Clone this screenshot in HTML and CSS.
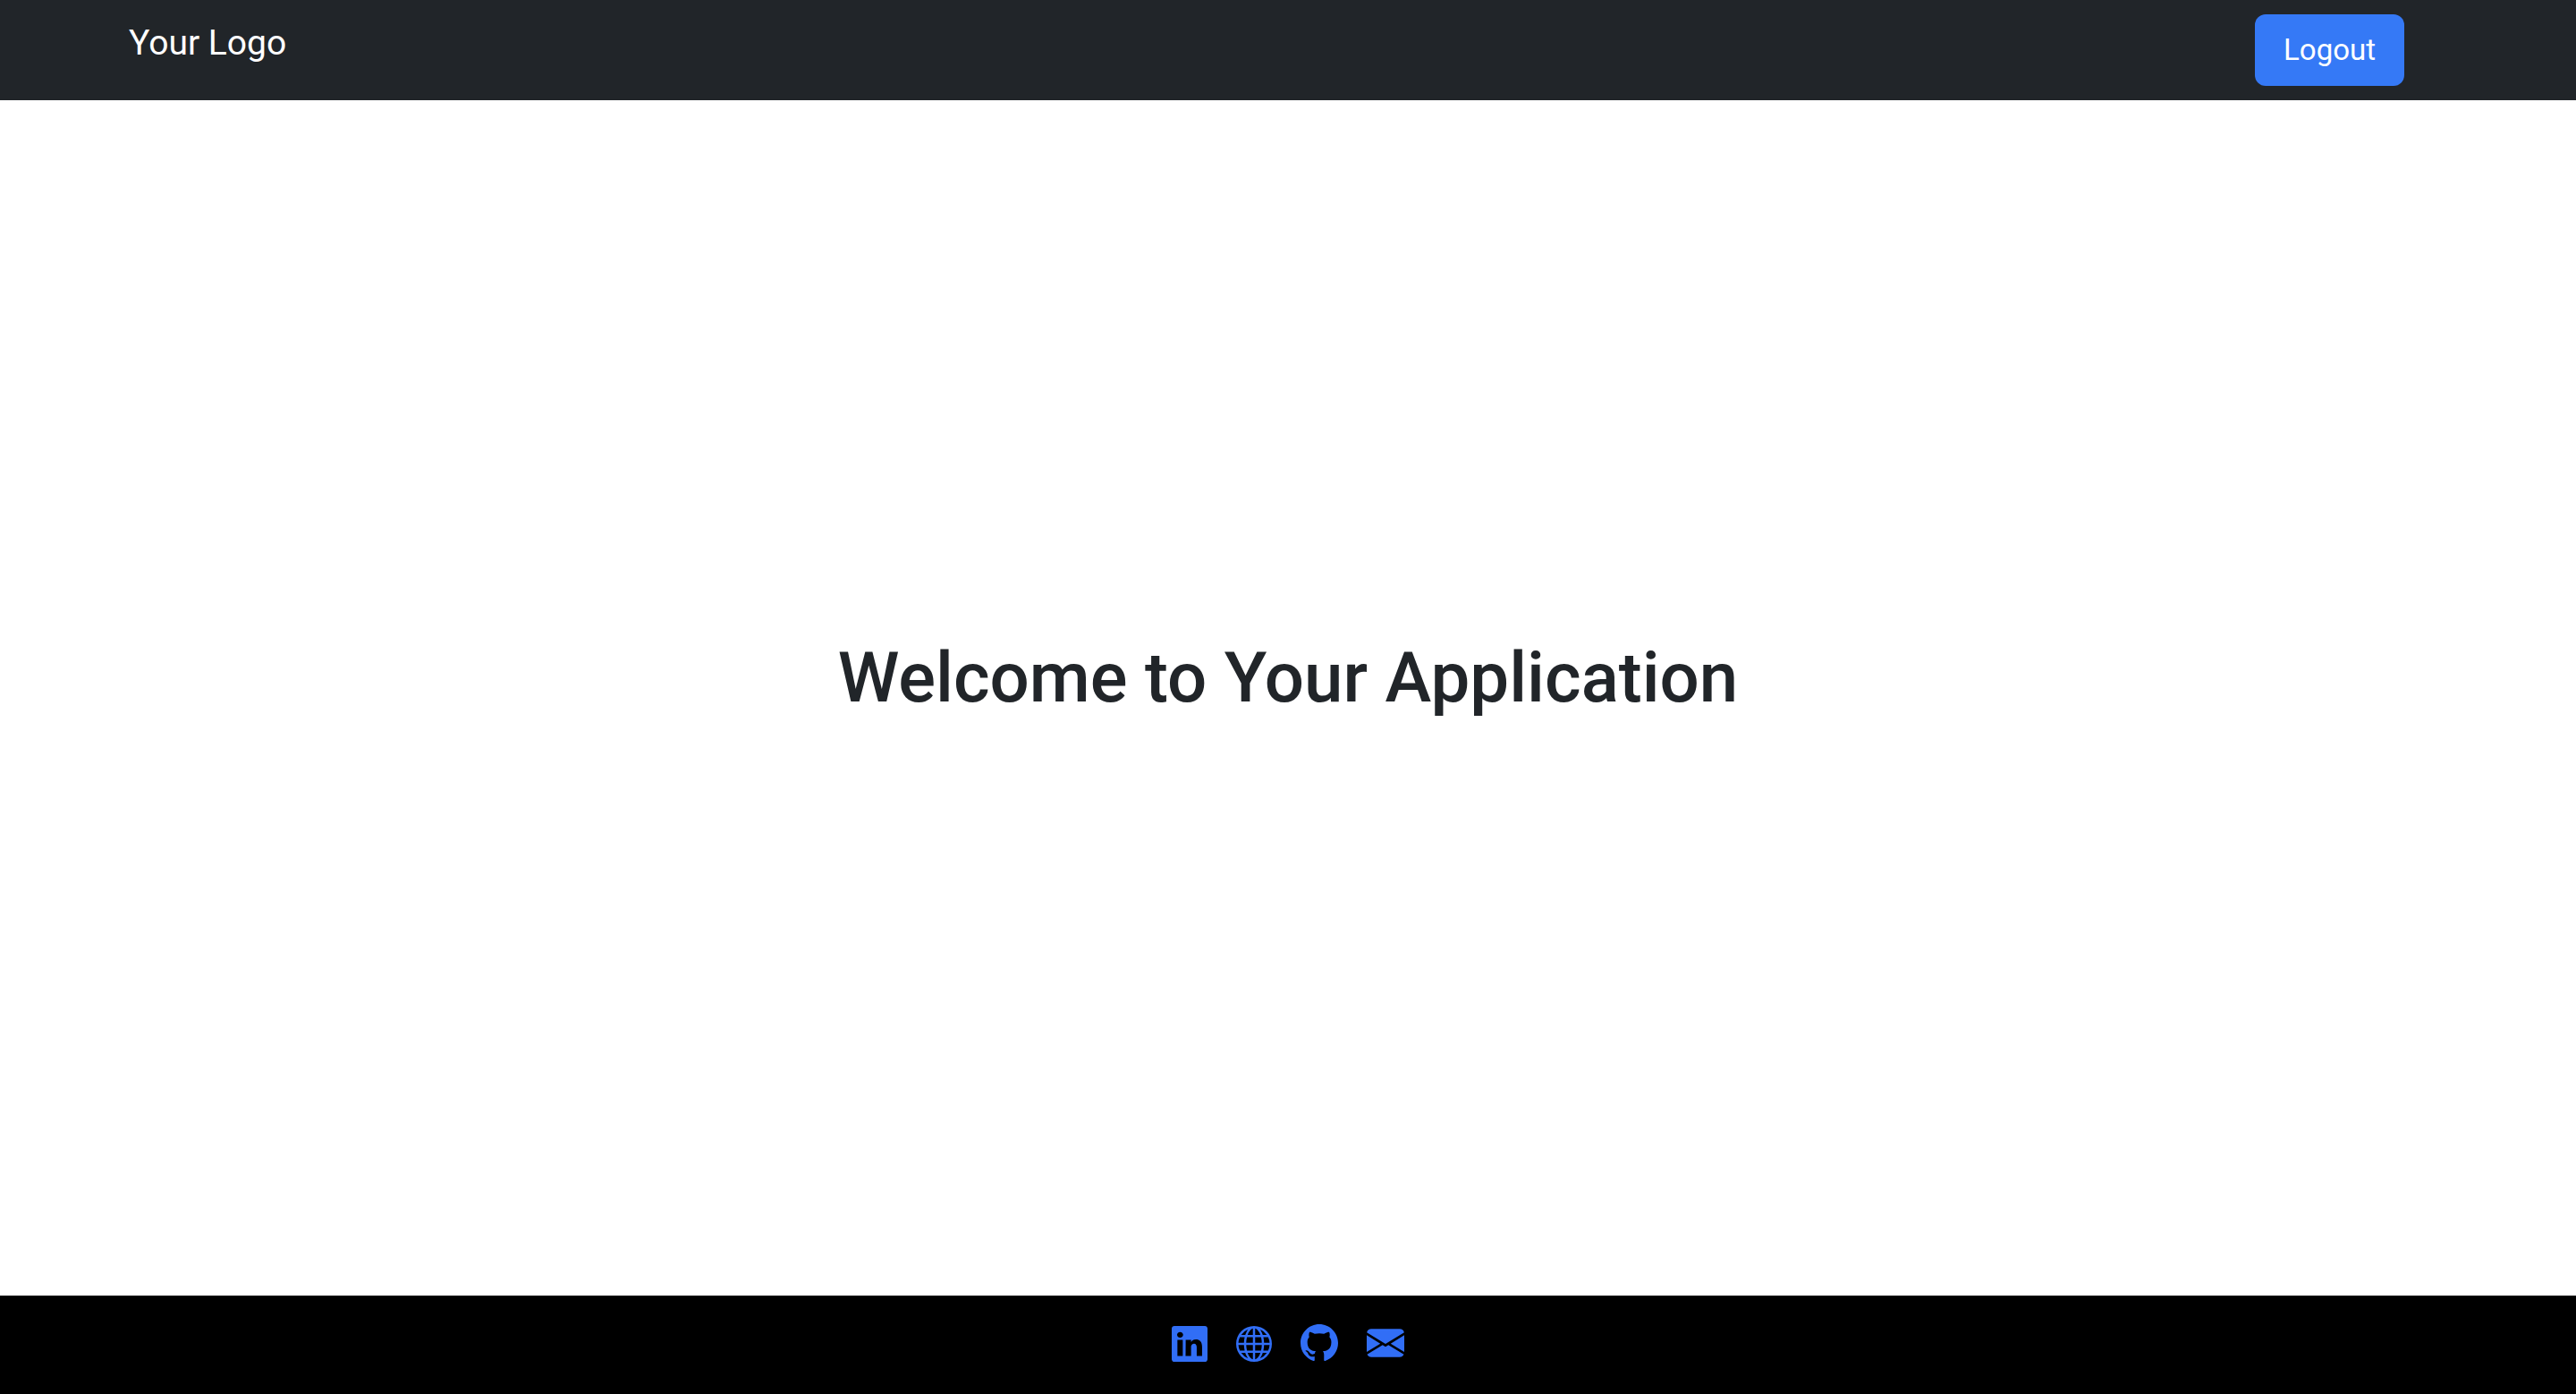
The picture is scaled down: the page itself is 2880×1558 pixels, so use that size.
FILE: index.html
```html
<!DOCTYPE html>
<html lang="en">
<head>
  <meta charset="utf-8">
  <meta name="viewport" content="width=device-width, initial-scale=1">
  <title>Your Application</title>
  <link rel="stylesheet" href="styles.css">
</head>
<body>
  <header class="navbar">
    <a class="brand" href="#">Your Logo</a>
    <button class="logout" type="button">Logout</button>
  </header>
  <main class="welcome">
    <h1 class="title">Welcome to Your Application</h1>
  </main>
  <footer class="footer">
    <a class="social" href="#" aria-label="LinkedIn">
      <svg class="icon" viewBox="0 0 16 16" aria-hidden="true"><path d="M0 1.146C0 .513.526 0 1.175 0h13.65C15.474 0 16 .513 16 1.146v13.708c0 .633-.526 1.146-1.175 1.146H1.175C.526 16 0 15.487 0 14.854zm4.943 12.248V6.169H2.542v7.225zm-1.2-8.212c.837 0 1.358-.554 1.358-1.248-.015-.709-.52-1.248-1.342-1.248S2.4 3.226 2.4 3.934c0 .694.521 1.248 1.327 1.248zm4.908 8.212V9.359c0-.216.016-.432.08-.586.173-.431.568-.878 1.232-.878.869 0 1.216.662 1.216 1.634v3.865h2.401V9.25c0-2.22-1.184-3.252-2.764-3.252-1.274 0-1.845.7-2.165 1.193v.025h-.016l.016-.025V6.169h-2.4c.03.678 0 7.225 0 7.225z"/></svg>
    </a>
    <a class="social" href="#" aria-label="Website">
      <svg class="icon" viewBox="0 0 16 16" aria-hidden="true"><path d="M0 8a8 8 0 1 1 16 0A8 8 0 0 1 0 8m7.5-6.923c-.67.204-1.335.82-1.887 1.855A8 8 0 0 0 5.145 4H7.5zM4.09 4a9.3 9.3 0 0 1 .64-1.539 7 7 0 0 1 .597-.933A7.03 7.03 0 0 0 2.255 4zm-.582 3.5c.03-.877.138-1.718.312-2.5H1.674a7 7 0 0 0-.656 2.5zM4.847 5a12.5 12.5 0 0 0-.338 2.5H7.5V5zM8.5 5v2.5h2.99a12.5 12.5 0 0 0-.337-2.5zM4.51 8.5a12.5 12.5 0 0 0 .337 2.5H7.5V8.5zm3.99 0V11h2.653c.187-.765.306-1.608.338-2.5zM5.145 12q.208.58.468 1.068c.552 1.035 1.218 1.65 1.887 1.855V12zm.182 2.472a7 7 0 0 1-.597-.933A9.3 9.3 0 0 1 4.09 12H2.255a7 7 0 0 0 3.072 2.472M3.82 11a13.7 13.7 0 0 1-.312-2.5h-2.49c.062.89.291 1.733.656 2.5zm6.853 3.472A7 7 0 0 0 13.745 12H11.91a9.3 9.3 0 0 1-.64 1.539 7 7 0 0 1-.597.933M8.5 12v2.923c.67-.204 1.335-.82 1.887-1.855q.26-.487.468-1.068zm3.68-1h2.146c.365-.767.594-1.61.656-2.5h-2.49a13.7 13.7 0 0 1-.312 2.5m2.802-3.5a7 7 0 0 0-.656-2.5H12.18c.174.782.282 1.623.312 2.5zM11.27 2.461c.247.464.462.98.64 1.539h1.835a7 7 0 0 0-3.072-2.472c.218.284.418.598.597.933M10.855 4a8 8 0 0 0-.468-1.068C9.835 1.897 9.17 1.282 8.5 1.077V4z"/></svg>
    </a>
    <a class="social" href="#" aria-label="GitHub">
      <svg class="icon icon-large" viewBox="0 0 16 16" aria-hidden="true"><path d="M8 0C3.58 0 0 3.58 0 8c0 3.54 2.29 6.53 5.47 7.59.4.07.55-.17.55-.38 0-.19-.01-.82-.01-1.49-2.01.37-2.53-.49-2.69-.94-.09-.23-.48-.94-.82-1.13-.28-.15-.68-.52-.01-.53.63-.01 1.08.58 1.23.82.72 1.21 1.87.87 2.33.66.07-.52.28-.87.51-1.07-1.78-.2-3.64-.89-3.64-3.95 0-.87.31-1.59.82-2.15-.08-.2-.36-1.02.08-2.12 0 0 .67-.21 2.2.82.64-.18 1.32-.27 2-.27s1.36.09 2 .27c1.53-1.04 2.2-.82 2.2-.82.44 1.1.16 1.92.08 2.12.51.56.82 1.27.82 2.15 0 3.07-1.87 3.75-3.65 3.95.29.25.54.73.54 1.48 0 1.07-.01 1.93-.01 2.2 0 .21.15.46.55.38A8.01 8.01 0 0 0 16 8c0-4.42-3.58-8-8-8"/></svg>
    </a>
    <a class="social" href="#" aria-label="Email">
      <svg class="icon icon-large" viewBox="0 0 16 16" aria-hidden="true"><path d="M.05 3.555A2 2 0 0 1 2 2h12a2 2 0 0 1 1.95 1.555L8 8.414zM0 4.697v7.104l5.803-3.558zM6.761 8.83l-6.57 4.027A2 2 0 0 0 2 14h12a2 2 0 0 0 1.808-1.144l-6.57-4.027L8 9.586zm3.436-.586L16 11.801V4.697z"/></svg>
    </a>
  </footer>
</body>
</html>
```
FILE: styles.css
```css
* {
  box-sizing: border-box;
}

html,
body {
  height: 100%;
}

body {
  display: flex;
  flex-direction: column;
  margin: 0;
  background: #fff;
  color: #212529;
  font-family: Roboto, "Liberation Sans", sans-serif;
}

.navbar {
  display: flex;
  align-items: flex-start;
  justify-content: space-between;
  padding: 16px 192px 16px 144px;
  background: #212529;
}

.brand {
  color: #fff;
  font-size: 39px;
  line-height: 64px;
  text-decoration: none;
}

.logout {
  padding: 16px 32px;
  border: 0;
  border-radius: 12px;
  background: #3579f6;
  color: #fff;
  font-family: inherit;
  font-size: 33px;
  line-height: 48px;
}

.welcome {
  display: flex;
  flex: 1;
  align-items: center;
  justify-content: center;
  padding-bottom: 44px;
}

.title {
  margin: 0;
  font-size: 78px;
  font-weight: 500;
  line-height: 96px;
}

.footer {
  display: flex;
  align-items: flex-end;
  justify-content: center;
  gap: 32px;
  padding: 32px 32px 36px;
  background: #000;
}

.social {
  display: flex;
  color: #316ef6;
}

.icon {
  width: 40px;
  height: 40px;
  fill: currentColor;
}

.icon-large {
  width: 42px;
  height: 42px;
}
```
